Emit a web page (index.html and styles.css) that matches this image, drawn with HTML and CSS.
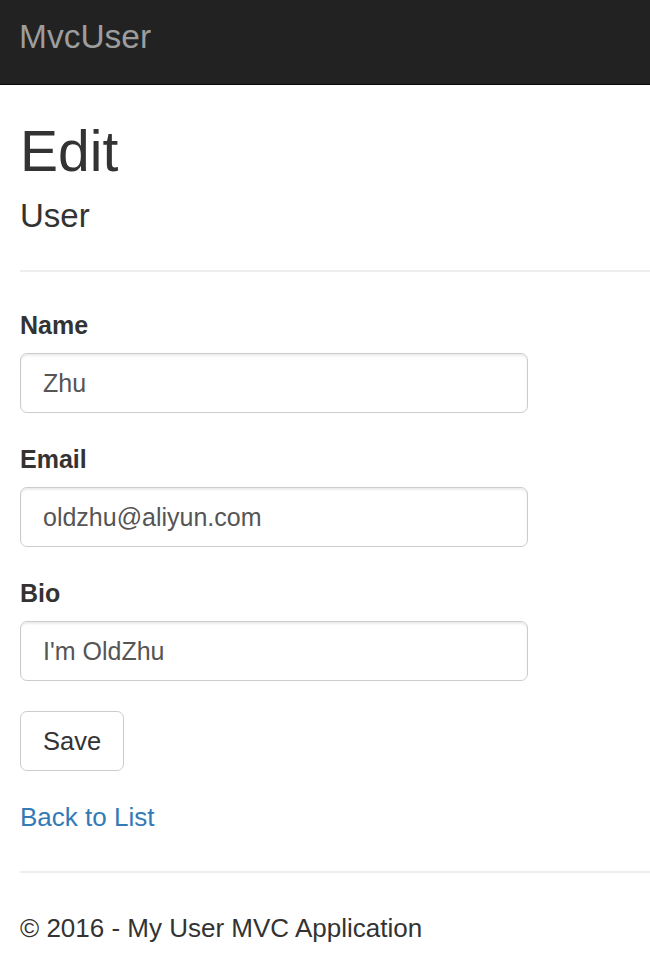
FILE: index.html
```html
<!DOCTYPE html>
<html lang="en">
<head>
<meta charset="utf-8">
<title>Edit - MvcUser</title>
<link rel="stylesheet" href="styles.css">
</head>
<body>
<header class="navbar">
  <a class="brand" href="#">MvcUser</a>
</header>
<main class="content">
  <h2 class="title">Edit</h2>
  <h4 class="subtitle">User</h4>
  <hr class="rule rule-top">
  <form class="form">
    <div class="form-group">
      <label class="label" for="name">Name</label>
      <input class="input" id="name" type="text" value="Zhu">
    </div>
    <div class="form-group">
      <label class="label" for="email">Email</label>
      <input class="input" id="email" type="text" value="oldzhu@aliyun.com">
    </div>
    <div class="form-group">
      <label class="label" for="bio">Bio</label>
      <input class="input" id="bio" type="text" value="I'm OldZhu">
    </div>
    <div class="actions">
      <button class="btn" type="button">Save</button>
    </div>
  </form>
  <div class="back">
    <a class="link" href="#">Back to List</a>
  </div>
  <hr class="rule rule-bottom">
  <footer class="footer">
    <p class="copy">© 2016 - My User MVC Application</p>
  </footer>
</main>
</body>
</html>
```
FILE: styles.css
```css
html, body {
  margin: 0;
  padding: 0;
  background: #ffffff;
}
body {
  font-family: "Liberation Sans", Arial, sans-serif;
  font-size: 25px;
  line-height: 36px;
  color: #333333;
}
.navbar {
  height: 84px;
  background: #222222;
  border-bottom: 1px solid #080808;
  box-sizing: content-box;
}
.brand {
  display: block;
  padding: 18px 19px 0;
  font-size: 33.5px;
  line-height: 38px;
  color: #9d9d9d;
  text-decoration: none;
}
.content {
  padding-left: 20px;
}
.title {
  margin: 35px 0 0;
  font-size: 57px;
  line-height: 62px;
  font-weight: 400;
}
.subtitle {
  margin: 16px 0 0;
  font-size: 33px;
  line-height: 36px;
  font-weight: 400;
}
.rule {
  border: 0;
  border-top: 2px solid #eeeeee;
  height: 0;
  margin: 36px 0 0;
}
.rule-top {
  margin-bottom: 35px;
}
.rule-bottom {
  margin-bottom: 37px;
}
.form {
  margin: 0;
}
.form-group {
  margin-bottom: 28px;
}
.label {
  display: block;
  font-weight: 700;
  margin-bottom: 10px;
}
.input {
  display: block;
  box-sizing: border-box;
  width: 508px;
  height: 60px;
  padding: 0 22px;
  border: 1px solid #cccccc;
  border-radius: 7px;
  box-shadow: inset 0 2px 2px rgba(0, 0, 0, 0.075);
  font-family: inherit;
  font-size: 25px;
  color: #555555;
  background: #ffffff;
}
.actions {
  padding-top: 2px;
}
.btn {
  box-sizing: border-box;
  height: 60px;
  padding: 0 22px;
  border: 1px solid #cccccc;
  border-radius: 7px;
  background: #ffffff;
  font-family: inherit;
  font-size: 25.5px;
  color: #333333;
}
.back {
  margin-top: 28px;
  font-size: 26px;
}
.link {
  color: #337ab7;
  text-decoration: none;
}
.footer {
  margin: 0;
}
.copy {
  margin: 0;
  padding-bottom: 20px;
  font-size: 26px;
}
```
